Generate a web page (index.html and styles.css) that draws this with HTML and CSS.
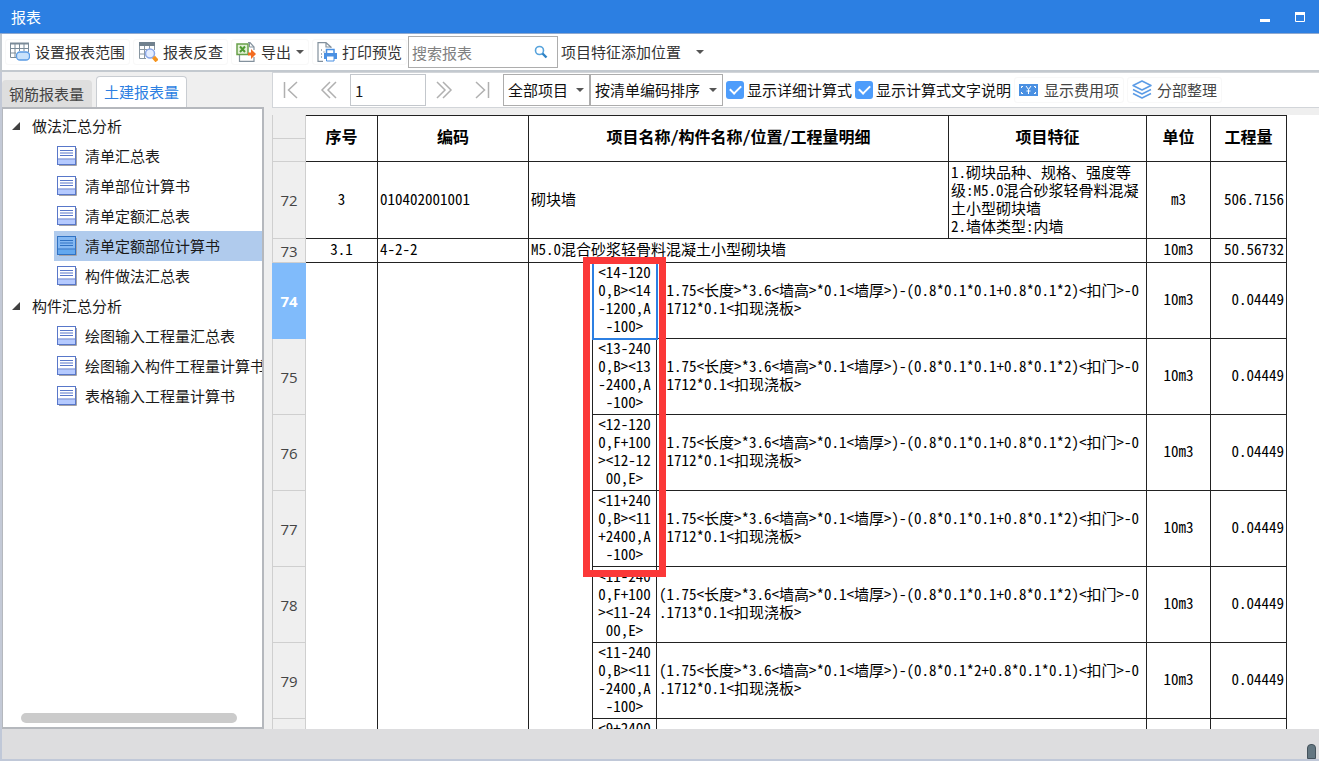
FILE: index.html
```
<!DOCTYPE html>
<html lang="zh-CN">
<head>
<meta charset="utf-8">
<title>报表</title>
<link rel="stylesheet" href="styles.css">
</head>
<body>
<svg class="defs" aria-hidden="true">
  <symbol id="doc" viewBox="0 0 20 20">
    <path d="M2 19.500H19.500V2" fill="none" stroke="#a3a3a8" stroke-width="1"/>
    <rect class="doc-page" x="0.500" y="0.500" width="18" height="18"/>
    <path class="doc-foot" d="M1 13.500H18V18H1z"/>
    <path class="doc-lines" d="M1 13H18M3 4.500H16M3 7H16M3 9.500H16"/>
  </symbol>
</svg>
<div class="window">
  <header class="titlebar">
    <h1>报表</h1>
    <div class="window-buttons">
      <button type="button" aria-label="最小化"><svg width="12" height="12"><path d="M1 9.500H11" stroke="#fff" stroke-width="3"/></svg></button>
      <button type="button" aria-label="最大化"><svg width="12" height="12"><path d="M1.500 2V10.500H10.500V2" fill="none" stroke="#fff"/><path d="M1 2.500H11" stroke="#fff" stroke-width="3"/></svg></button>
    </div>
  </header>

  <div class="toolbar">
    <button type="button" class="tool">
      <svg width="20" height="20" viewBox="0 0 20 20"><g fill="none" stroke="#7b8b98"><path d="M.5 1.500H18.500V10M.5 1V15.500H6M.5 6.500H18M.5 11H6M5 1.500V15M9.500 1.500V9M14 1.500V9"/></g><path d="M0 1.500H19" stroke="#7b8b98" stroke-width="2"/><rect x="6.500" y="10" width="13" height="8" rx="3.500" fill="#c9e2fb" stroke="#5a9be4" stroke-width="1.300"/></svg>
      设置报表范围</button>
    <button type="button" class="tool">
      <svg width="20" height="20" viewBox="0 0 20 20"><path d="M1.500 1V16.500H8M1.500 7.500H9M1.500 12H7M6.500 4V16M11.500 4V7M16.500 4V8" fill="none" stroke="#8997a2"/><path d="M1 0H17V4H1z" fill="#71818e"/><circle cx="12" cy="11.500" r="4.500" fill="#e4edff" stroke="#8aa7e8" stroke-width="1.500"/><path d="M15.500 15L19 19" stroke="#f5941e" stroke-width="4"/></svg>
      报表反查</button>
    <button type="button" class="tool">
      <svg width="20" height="20" viewBox="0 0 20 20"><path d="M12 .7H14L18 5V8M18 15V19.300H3.500V13" fill="none" stroke="#83919d" stroke-width="1.200"/><path d="M13.500 1V5H18" fill="none" stroke="#83919d"/><rect x="1" y="2" width="11" height="10.500" fill="#e2f1d7" stroke="#68a04a" stroke-width="1.500"/><path d="M4 4.500L9 10M9 4.500L4 10" stroke="#4f9a32" stroke-width="2"/><path d="M12 10.500H15V7L20 12L15 17V13.500H12z" fill="#f26c22"/></svg>
      导出<span class="caret"></span></button>
    <button type="button" class="tool">
      <svg width="20" height="20" viewBox="0 0 20 20"><path d="M14 6V5L9 .7H1V19.300H6M9 1V5H13.500" fill="none" stroke="#83919d" stroke-width="1.200"/><path d="M4 8h1M6.500 10h1M4 12h1M4 15h1" stroke="#8997a2" stroke-width="1.500"/><path d="M9.500 11V7.500H17V11" fill="#fff" stroke="#4a90e2" stroke-width="1.500"/><path d="M7 11H20V17H7z" fill="#4a90e2"/><path d="M9.500 14H17V19H9.500z" fill="#fff" stroke="#4a90e2"/></svg>
      打印预览</button>
    <label class="search">
      <input type="text" placeholder="搜索报表" aria-label="搜索报表">
      <svg width="14" height="14" viewBox="0 0 14 14"><circle cx="5.500" cy="5.500" r="4" fill="none" stroke="#57a3dc" stroke-width="1.600"/><path d="M8.500 8.500L12.500 12.500" stroke="#2f83c5" stroke-width="2.400"/></svg>
    </label>
    <button type="button" class="placement">项目特征添加位置<span class="caret"></span></button>
  </div>

  <main class="body">
    <aside class="side">
      <div class="tabs" role="tablist">
        <button type="button" role="tab" aria-selected="false" class="tab">钢筋报表量</button>
        <button type="button" role="tab" aria-selected="true" class="tab active">土建报表量</button>
      </div>
      <nav class="tree">
        <div class="group"><svg width="8" height="8"><path d="M8 0V8H0z" fill="#404040"/></svg>做法汇总分析</div>
        <ul>
          <li><a href="#a"><svg width="20" height="20"><use href="#doc"/></svg>清单汇总表</a></li>
          <li><a href="#b"><svg width="20" height="20"><use href="#doc"/></svg>清单部位计算书</a></li>
          <li><a href="#c"><svg width="20" height="20"><use href="#doc"/></svg>清单定额汇总表</a></li>
          <li><a href="#d" class="selected"><svg width="20" height="20"><use href="#doc"/></svg>清单定额部位计算书</a></li>
          <li><a href="#e"><svg width="20" height="20"><use href="#doc"/></svg>构件做法汇总表</a></li>
        </ul>
        <div class="group"><svg width="8" height="8"><path d="M8 0V8H0z" fill="#404040"/></svg>构件汇总分析</div>
        <ul>
          <li><a href="#f"><svg width="20" height="20"><use href="#doc"/></svg>绘图输入工程量汇总表</a></li>
          <li><a href="#g"><svg width="20" height="20"><use href="#doc"/></svg>绘图输入构件工程量计算书</a></li>
          <li><a href="#h"><svg width="20" height="20"><use href="#doc"/></svg>表格输入工程量计算书</a></li>
        </ul>
        <div class="scrollbar"></div>
      </nav>
    </aside>

    <section class="report">
      <div class="pager">
        <button type="button" class="nav first" aria-label="首页"><svg width="18" height="18" viewBox="0 0 18 18"><path d="M2.500 1V17M15 1L6.500 9L15 17"/></svg></button>
        <button type="button" class="nav" aria-label="上一页"><svg width="18" height="18" viewBox="0 0 18 18"><path d="M10 1L2 9L10 17M16 1L8 9L16 17"/></svg></button>
        <input class="page" type="text" value="1" aria-label="页码">
        <button type="button" class="nav next" aria-label="下一页"><svg width="18" height="18" viewBox="0 0 18 18"><path d="M2 1L10 9L2 17M8 1L16 9L8 17"/></svg></button>
        <button type="button" class="nav" aria-label="末页"><svg width="18" height="18" viewBox="0 0 18 18"><path d="M15.500 1V17M3 1L11.500 9L3 17"/></svg></button>
        <span class="combo scope"><select aria-label="项目范围"><option>全部项目</option></select><span class="caret"></span></span>
        <span class="combo sort"><select aria-label="排序方式"><option>按清单编码排序</option></select><span class="caret"></span></span>
        <label class="check"><input type="checkbox" checked>显示详细计算式</label>
        <label class="check"><input type="checkbox" checked>显示计算式文字说明</label>
        <button type="button" class="tool">
          <svg width="20" height="20" viewBox="0 0 20 20"><path d="M0 4H19V16H0z" fill="#4a90e2"/><path d="M2.500 8V6.500H4M2.500 12V13.500H4M16.500 8V6.500H15M16.500 12V13.500H15M7 6L9.500 9.500L12 6M9.500 9.500V14M7.500 11H11.500" fill="none" stroke="#fff"/></svg>
          显示费用项</button>
        <button type="button" class="tool">
          <svg width="20" height="20" viewBox="0 0 20 20"><g fill="none" stroke="#5c9ce6" stroke-width="1.500" stroke-linejoin="round"><path d="M10 1L19 5.500L10 10L1 5.500z"/><path d="M1 9.500L10 14L19 9.500M1 13.500L10 18L19 13.500"/></g></svg>
          分部整理</button>
      </div>

      <div class="sheet">
        <table>
          <colgroup><col class="c-num"><col class="c-seq"><col class="c-code"><col class="c-pad"><col class="c-pos"><col class="c-detail"><col class="c-feature"><col class="c-unit"><col class="c-qty"></colgroup>
          <thead>
            <tr class="half">
              <td class="num"></td>
              <th rowspan="2">序号</th><th rowspan="2">编码</th><th rowspan="2" colspan="3">项目名称/构件名称/位置/工程量明细</th><th rowspan="2">项目特征</th><th rowspan="2">单位</th><th rowspan="2">工程量</th>
            </tr>
            <tr class="half"><td class="num"></td></tr>
          </thead>
          <tbody>
            <tr class="item">
              <td class="num">72</td><td class="mid">3</td><td>010402001001</td><td colspan="3">砌块墙</td>
              <td>1.砌块品种、规格、强度等<br>级:M5.0混合砂浆轻骨料混凝<br>土小型砌块墙<br>2.墙体类型:内墙</td><td class="mid">m3</td><td class="qty">506.7156</td>
            </tr>
            <tr class="single">
              <td class="num">73</td><td class="mid">3.1</td><td>4-2-2</td><td colspan="4">M5.0混合砂浆轻骨料混凝土小型砌块墙</td><td class="mid">10m3</td><td class="qty">50.56732</td>
            </tr>
            <tr class="line">
              <td class="num current">74</td><td rowspan="7"></td><td rowspan="7"></td><td rowspan="7"></td>
              <td class="mid cursor">&lt;14-120<br>0,B&gt;&lt;14<br>-1200,A<br>-100&gt;</td>
              <td colspan="2">(1.75&lt;长度&gt;*3.6&lt;墙高&gt;*0.1&lt;墙厚&gt;)-(0.8*0.1*0.1+0.8*0.1*2)&lt;扣门&gt;-0<br>.1712*0.1&lt;扣现浇板&gt;</td><td class="mid">10m3</td><td class="qty">0.04449</td>
            </tr>
            <tr class="line">
              <td class="num">75</td>
              <td class="mid">&lt;13-240<br>0,B&gt;&lt;13<br>-2400,A<br>-100&gt;</td>
              <td colspan="2">(1.75&lt;长度&gt;*3.6&lt;墙高&gt;*0.1&lt;墙厚&gt;)-(0.8*0.1*0.1+0.8*0.1*2)&lt;扣门&gt;-0<br>.1712*0.1&lt;扣现浇板&gt;</td><td class="mid">10m3</td><td class="qty">0.04449</td>
            </tr>
            <tr class="line">
              <td class="num">76</td>
              <td class="mid">&lt;12-120<br>0,F+100<br>&gt;&lt;12-12<br>00,E&gt;</td>
              <td colspan="2">(1.75&lt;长度&gt;*3.6&lt;墙高&gt;*0.1&lt;墙厚&gt;)-(0.8*0.1*0.1+0.8*0.1*2)&lt;扣门&gt;-0<br>.1712*0.1&lt;扣现浇板&gt;</td><td class="mid">10m3</td><td class="qty">0.04449</td>
            </tr>
            <tr class="line">
              <td class="num">77</td>
              <td class="mid">&lt;11+240<br>0,B&gt;&lt;11<br>+2400,A<br>-100&gt;</td>
              <td colspan="2">(1.75&lt;长度&gt;*3.6&lt;墙高&gt;*0.1&lt;墙厚&gt;)-(0.8*0.1*0.1+0.8*0.1*2)&lt;扣门&gt;-0<br>.1712*0.1&lt;扣现浇板&gt;</td><td class="mid">10m3</td><td class="qty">0.04449</td>
            </tr>
            <tr class="line">
              <td class="num">78</td>
              <td class="mid">&lt;11-240<br>0,F+100<br>&gt;&lt;11-24<br>00,E&gt;</td>
              <td colspan="2">(1.75&lt;长度&gt;*3.6&lt;墙高&gt;*0.1&lt;墙厚&gt;)-(0.8*0.1*0.1+0.8*0.1*2)&lt;扣门&gt;-0<br>.1713*0.1&lt;扣现浇板&gt;</td><td class="mid">10m3</td><td class="qty">0.04449</td>
            </tr>
            <tr class="line">
              <td class="num">79</td>
              <td class="mid">&lt;11-240<br>0,B&gt;&lt;11<br>-2400,A<br>-100&gt;</td>
              <td colspan="2">(1.75&lt;长度&gt;*3.6&lt;墙高&gt;*0.1&lt;墙厚&gt;)-(0.8*0.1*2+0.8*0.1*0.1)&lt;扣门&gt;-0<br>.1712*0.1&lt;扣现浇板&gt;</td><td class="mid">10m3</td><td class="qty">0.04449</td>
            </tr>
            <tr class="line last">
              <td class="num"></td>
              <td class="mid">&lt;9+2400</td>
              <td colspan="2"></td><td></td><td></td>
            </tr>
          </tbody>
        </table>
        <div class="highlight"></div>
      </div>
    </section>
  </main>
  <footer class="status"><span class="grip"></span></footer>
</div>
</body>
</html>
```
FILE: styles.css
```
* { box-sizing: border-box; }
body {
  margin: 0;
  color: #1a1a1a;
  font: 15px/20px "Noto Sans CJK SC", sans-serif;
}
button, input, select { font: inherit; color: inherit; }
button { background: none; border: 0; padding: 0; white-space: nowrap; }
a { color: inherit; text-decoration: none; }
svg { flex: none; display: block; }
.defs { position: absolute; width: 0; height: 0; }

.window {
  display: flex;
  flex-direction: column;
  height: 100vh;
  overflow: hidden;
  background: #efefef;
}

.titlebar {
  display: flex;
  align-items: center;
  justify-content: space-between;
  flex: none;
  height: 34px;
  padding: 0 13px 0 11px;
  background: #2c7fe2;
  border-bottom: 1px solid #8fa9cf;
  color: #fff;
}
.titlebar h1 { margin: 0; font-size: 15px; font-weight: 400; }
.window-buttons { display: flex; gap: 23px; }

.toolbar {
  display: flex;
  align-items: center;
  gap: 3px;
  flex: none;
  height: 38px;
  padding-left: 3px;
  background: #fff;
  border: solid #c3c9cf;
  border-width: 0 0 2px 2px;
  color: #333;
}
.tool {
  display: flex;
  align-items: center;
  gap: 5px;
  height: 26px;
  padding: 0 4px;
  border: 1px solid #f8f8f8;
  border-radius: 3px;
}
.caret {
  width: 0;
  height: 0;
  border: solid transparent;
  border-width: 4px 4px 0;
  border-top-color: #555;
}
.search { display: flex; align-items: center; position: relative; margin-left: -2px; }
.search input {
  width: 150px;
  height: 32px;
  padding: 0 30px 0 3px;
  border: 1px solid #adadad;
  background: #fff;
}
.search input::placeholder { color: #808080; opacity: 1; }
.search svg { position: absolute; right: 10px; }
.placement { display: flex; align-items: center; gap: 15px; }

.body { display: flex; flex: 1; min-height: 0; border-left: 2px solid #c3c9d6; }

.side { display: flex; flex-direction: column; flex: none; width: 262px; }
.tabs {
  display: flex;
  align-items: flex-end;
  gap: 4px;
  height: 35px;
  flex: none;
}
.tab {
  height: 27px;
  padding: 0 8px 0 7px;
  background: #dedede;
  border-radius: 4px 4px 0 0;
  color: #444;
}
.tab.active {
  height: 31px;
  padding: 0 7px;
  background: #fff;
  border: 1px solid #c9cdd2;
  border-bottom: 0;
  color: #2c7fe2;
}
.tree {
  display: flex;
  flex-direction: column;
  flex: 1;
  min-height: 0;
  padding-top: 2px;
  overflow: hidden;
  background: #fff;
  border: solid #b5b8bd;
  border-width: 2px 2px 2px 1px;
}
.group { display: flex; align-items: center; gap: 12px; height: 30px; padding-left: 9px; flex: none; }
.tree ul { margin: 0; padding: 0 0 0 51px; list-style: none; }
.tree a { display: flex; align-items: center; gap: 8px; height: 30px; padding-left: 3px; white-space: nowrap; }
.tree .selected { background: #b0cbed; }
.tree a { --page: #fff; --foot: #b5caff; --ink: #5877c9; }
.tree .selected { --page: #84b8f2; --foot: #63a8ef; --ink: #3072c4; }
.doc-page { fill: var(--page); stroke: var(--ink); }
.doc-foot { fill: var(--foot); }
.doc-lines { fill: none; stroke: var(--ink); }
.scrollbar { height: 10px; margin: auto 25px 4px 18px; border-radius: 5px; background: #cbcbcb; }

.report { display: flex; flex-direction: column; flex: 1; min-width: 0; margin-left: 8px; }
.pager {
  display: flex;
  align-items: center;
  flex: none;
  height: 36px;
  background: #fff;
  border: solid #d2d5d9;
  border-width: 1px 0 1px 1px;
  white-space: nowrap;
}
.nav { display: grid; place-items: center; width: 42px; height: 26px; }
.nav path { fill: none; stroke: #b0b0b0; stroke-width: 1.500px; }
.nav.first, .nav.next { width: 35px; }
.page { width: 76px; height: 32px; padding: 0 4px; border: 1px solid #c3c7cc; background: #fff; }
.combo { position: relative; height: 32px; }
.combo select {
  width: 100%;
  height: 100%;
  padding: 0 4px;
  appearance: none;
  background: #fff;
  border: 1px solid #adadad;
  border-radius: 0;
  color: #111;
}
.combo .caret { position: absolute; right: 6px; top: 14px; }
.scope { width: 87px; }
.sort { width: 133px; }
.check { display: flex; align-items: center; gap: 3px; padding-left: 3px; color: #111; }
.check input {
  display: grid;
  place-items: center;
  width: 18px;
  height: 18px;
  margin: 0;
  appearance: none;
  background: #4e9dfb;
  border-radius: 3px;
}
.check input::after {
  content: "";
  width: 5px;
  height: 9px;
  margin-bottom: 3px;
  border: solid #fff;
  border-width: 0 2px 2px 0;
  transform: rotate(45deg);
}
.pager .tool { margin-left: 3px; color: #444; }

.sheet {
  position: relative;
  flex: 1;
  min-height: 0;
  margin-top: 7px;
  overflow: hidden;
  background: #fff;
}
.sheet table {
  width: 1015px;
  table-layout: fixed;
  border-spacing: 0;
  color: #000;
  font-family: "Noto Sans Mono CJK SC", "Noto Sans CJK SC", monospace;
  font-feature-settings: "hwid";
  line-height: 18px;
}
.c-num { width: 34px; }
.c-seq { width: 72px; }
.c-code { width: 151px; }
.c-pad, .c-pos, .c-unit { width: 64px; }
.c-detail { width: 292px; }
.c-feature { width: 198px; }
.c-qty { width: 76px; }
.sheet td, .sheet th {
  padding: 0 2px 3px;
  border: solid #222;
  border-width: 0 1px 1px 0;
  white-space: nowrap;
}
.sheet thead th { padding-bottom: 5px; border-top-width: 1px; font-size: 16px; font-weight: 700; }
.half { height: 23px; }
.half:first-child { height: 24px; }
.item { height: 77px; }
.single { height: 24px; }
.line { height: 76px; }
.sheet .mid { padding: 0 0 3px; text-align: center; }
.sheet .qty { text-align: right; }
.sheet .num {
  padding: 0;
  background: #efefef;
  border-color: #cfcfcf;
  border-left-width: 1px;
  color: #444;
  font-family: "Open Sans", sans-serif;
  font-feature-settings: normal;
  text-align: center;
}
.sheet .num.current { background: #80bbfb; border-color: #80bbfb; color: #fff; font-weight: 700; }
.sheet .cursor { outline: 2px solid #2c7fe2; outline-offset: -1px; }
.sheet .last td { vertical-align: top; }
.highlight {
  position: absolute;
  left: 311px;
  top: 142px;
  width: 83px;
  height: 320px;
  border: 7px solid #fb3838;
}

.status {
  display: flex;
  justify-content: flex-end;
  align-items: flex-end;
  flex: none;
  height: 32px;
  padding-right: 3px;
  background: #dddddf;
  border: solid #c0c8d8;
  border-width: 0 0 2px 2px;
}
.grip { width: 9px; height: 15px; border: 1px solid #44525c; border-radius: 4px 4px 0 0; background: #637681; }
```
